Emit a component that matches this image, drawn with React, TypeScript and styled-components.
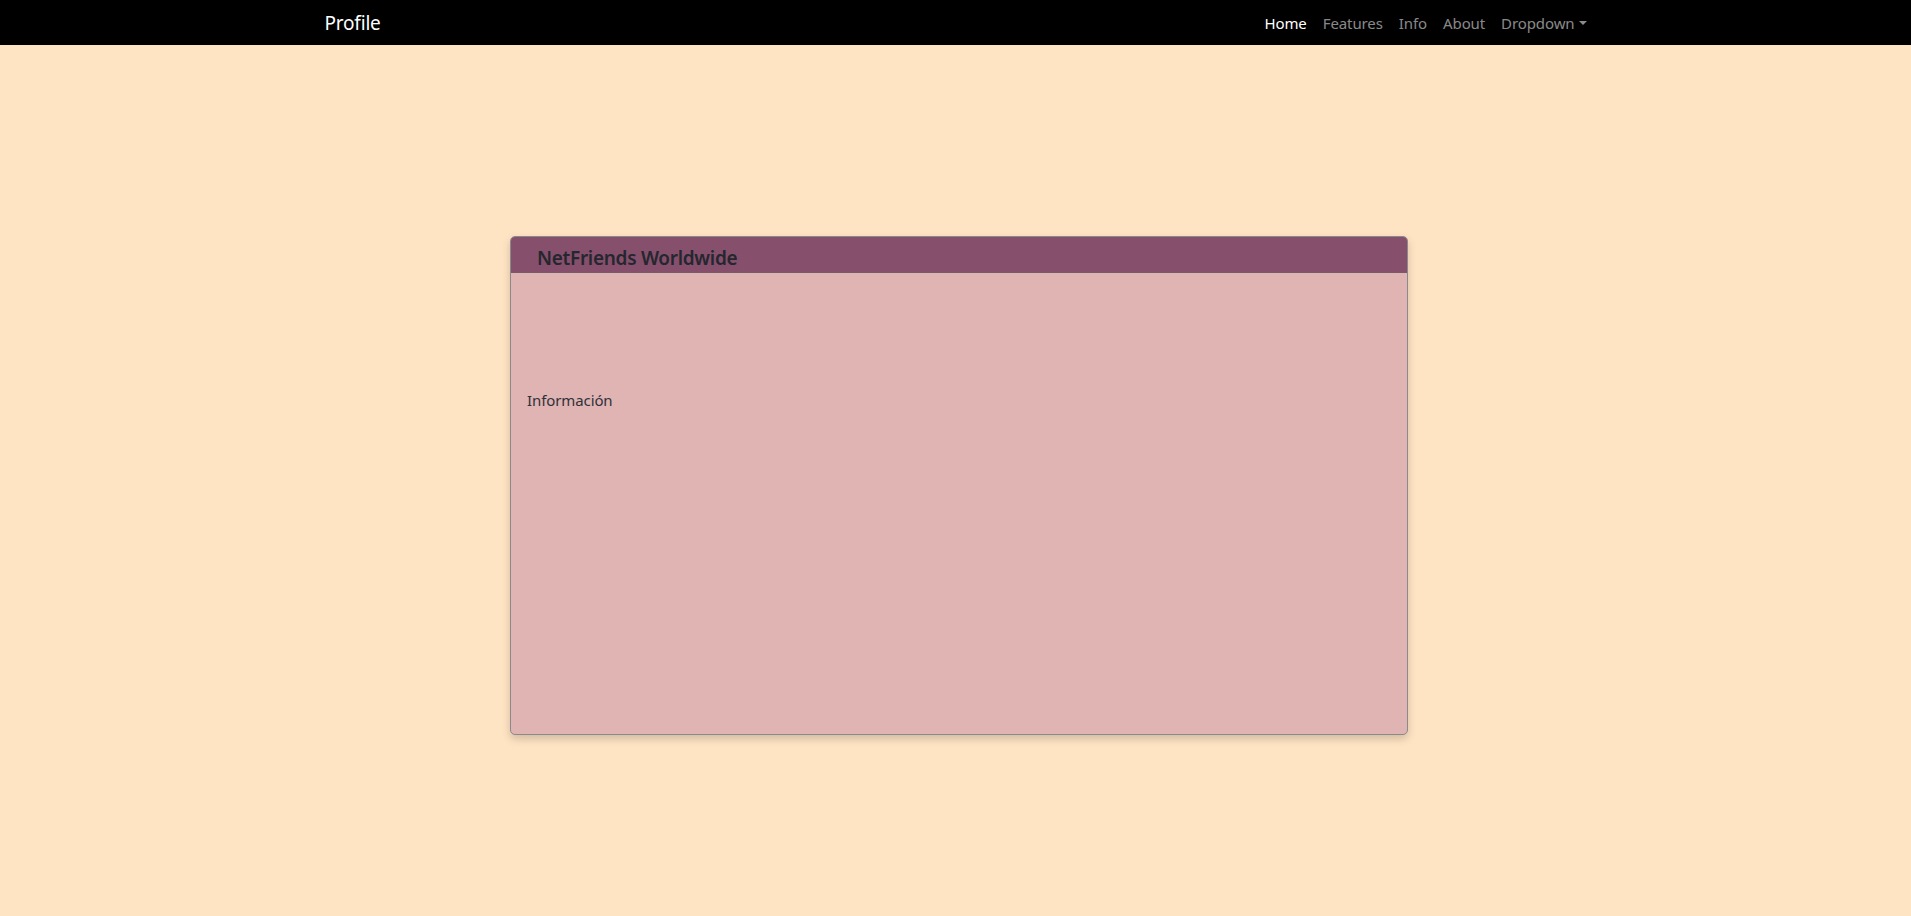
import React from "react";
import styled, { createGlobalStyle } from "styled-components";

const Global = createGlobalStyle`
  html, body { margin: 0; padding: 0; }
  body {
    background: #ffe4c4;
    font-family: "Noto Sans", "Open Sans", "DejaVu Sans", sans-serif;
    color: #212529;
    min-height: 916px;
  }
`;

const NavBar = styled.nav`
  background: #000;
  height: 45px;
  display: flex;
  align-items: center;
`;

const NavInner = styled.div`
  width: 1278px;
  margin: 0 auto;
  padding-left: 8px;
  box-sizing: border-box;
  display: flex;
  align-items: center;
  justify-content: space-between;
`;

const Brand = styled.a`
  color: #fff;
  font-size: 19px;
  text-decoration: none;
  letter-spacing: -0.2px;
`;

const Links = styled.ul`
  list-style: none;
  margin: 0;
  padding: 0;
  display: flex;
  align-items: center;
`;

const LinkItem = styled.li<{ $active?: boolean }>`
  padding: 8px 8px;
  font-size: 15px;
  letter-spacing: -0.1px;
  color: ${(p) => (p.$active ? "#fff" : "rgba(255,255,255,0.55)")};
  display: flex;
  align-items: center;
`;

const Caret = styled.span`
  display: inline-block;
  margin-left: 4px;
  border-top: 4px solid rgba(255,255,255,0.55);
  border-left: 4px solid transparent;
  border-right: 4px solid transparent;
`;

const Main = styled.main`
  display: flex;
  justify-content: center;
  padding-top: 191px;
  padding-left: 7px;
`;

const Card = styled.section`
  width: 898px;
  height: 499px;
  box-sizing: border-box;
  border: 1px solid #8a8a8a;
  border-radius: 5px;
  overflow: hidden;
  background: #dfb4b2;
  box-shadow: 0 4px 8px rgba(0,0,0,0.18);
  display: flex;
  flex-direction: column;
`;

const CardHeader = styled.header`
  background: #86506d;
  height: 35px;
  border-bottom: 1px solid #7a5a66;
  padding: 0 0 0 26px;
  display: flex;
  align-items: flex-end;
`;

const Title = styled.h5`
  margin: 0 0 1px 0;
  font-size: 19px;
  font-weight: 600;
  color: #25262e;
  letter-spacing: -0.3px;
`;

const CardBody = styled.div`
  padding: 117px 16px 0 16px;
  font-size: 15px;
  color: #30313a;
  letter-spacing: -0.1px;
`;

export default function App() {
  return (
    <>
      <Global />
      <NavBar>
        <NavInner>
          <Brand>Profile</Brand>
          <Links>
            <LinkItem $active>Home</LinkItem>
            <LinkItem>Features</LinkItem>
            <LinkItem>Info</LinkItem>
            <LinkItem>About</LinkItem>
            <LinkItem>
              Dropdown<Caret />
            </LinkItem>
          </Links>
        </NavInner>
      </NavBar>
      <Main>
        <Card>
          <CardHeader>
            <Title>NetFriends Worldwide</Title>
          </CardHeader>
          <CardBody>Información</CardBody>
        </Card>
      </Main>
    </>
  );
}
